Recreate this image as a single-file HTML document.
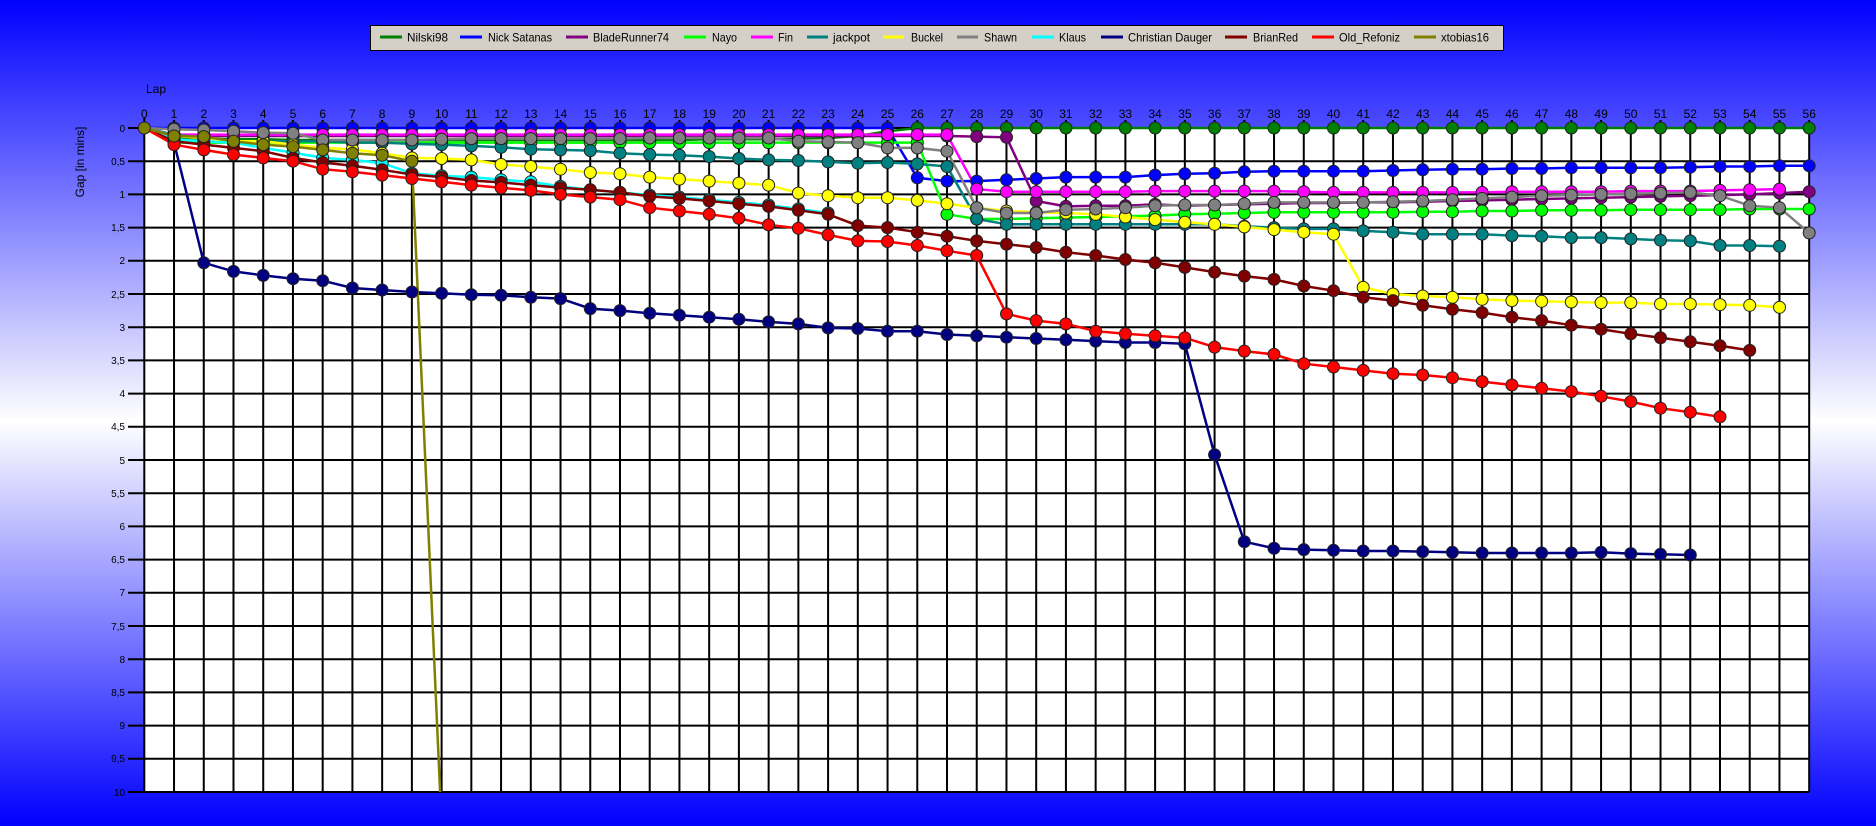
<!DOCTYPE html>
<html><head><meta charset="utf-8">
<style>
html,body{margin:0;padding:0}
body{width:1876px;height:826px;overflow:hidden;background:linear-gradient(#0000ff 0%,#ffffff 51%,#0000ff 100%);font-family:"Liberation Sans",sans-serif}
svg{position:absolute;left:0;top:0}
</style></head><body>
<svg id="s" width="1876" height="826" viewBox="0 0 1876 826" font-family="Liberation Sans, sans-serif">
<rect x="144.3" y="128" width="1665" height="664" fill="#fff"/>
<g id="grid" stroke="#000" stroke-width="2"></g>
<g id="xl" font-size="12" text-anchor="middle" fill="#000">
<text x="144.3" y="118">0</text><text x="174" y="118">1</text><text x="203.8" y="118">2</text><text x="233.5" y="118">3</text><text x="263.2" y="118">4</text><text x="293" y="118">5</text><text x="322.7" y="118">6</text><text x="352.4" y="118">7</text><text x="382.1" y="118">8</text><text x="411.9" y="118">9</text><text x="441.6" y="118">10</text><text x="471.3" y="118">11</text><text x="501.1" y="118">12</text><text x="530.8" y="118">13</text><text x="560.5" y="118">14</text><text x="590.3" y="118">15</text><text x="620" y="118">16</text><text x="649.7" y="118">17</text><text x="679.4" y="118">18</text><text x="709.2" y="118">19</text><text x="738.9" y="118">20</text><text x="768.6" y="118">21</text><text x="798.4" y="118">22</text><text x="828.1" y="118">23</text><text x="857.8" y="118">24</text><text x="887.6" y="118">25</text><text x="917.3" y="118">26</text><text x="947" y="118">27</text><text x="976.7" y="118">28</text><text x="1006.5" y="118">29</text><text x="1036.2" y="118">30</text><text x="1065.9" y="118">31</text><text x="1095.7" y="118">32</text><text x="1125.4" y="118">33</text><text x="1155.1" y="118">34</text><text x="1184.9" y="118">35</text><text x="1214.6" y="118">36</text><text x="1244.3" y="118">37</text><text x="1274" y="118">38</text><text x="1303.8" y="118">39</text><text x="1333.5" y="118">40</text><text x="1363.2" y="118">41</text><text x="1393" y="118">42</text><text x="1422.7" y="118">43</text><text x="1452.4" y="118">44</text><text x="1482.2" y="118">45</text><text x="1511.9" y="118">46</text><text x="1541.6" y="118">47</text><text x="1571.3" y="118">48</text><text x="1601.1" y="118">49</text><text x="1630.8" y="118">50</text><text x="1660.5" y="118">51</text><text x="1690.3" y="118">52</text><text x="1720" y="118">53</text><text x="1749.7" y="118">54</text><text x="1779.5" y="118">55</text><text x="1809.2" y="118">56</text>
</g>
<g font-size="10" text-anchor="end" fill="#000">
<text x="125" y="132">0</text><text x="125" y="165">0,5</text><text x="125" y="198">1</text><text x="125" y="231">1,5</text><text x="125" y="264">2</text><text x="125" y="298">2,5</text><text x="125" y="331">3</text><text x="125" y="364">3,5</text><text x="125" y="397">4</text><text x="125" y="430">4,5</text><text x="125" y="464">5</text><text x="125" y="497">5,5</text><text x="125" y="530">6</text><text x="125" y="563">6,5</text><text x="125" y="596">7</text><text x="125" y="630">7,5</text><text x="125" y="663">8</text><text x="125" y="696">8,5</text><text x="125" y="729">9</text><text x="125" y="762">9,5</text><text x="125" y="796">10</text>
</g>
<text x="146" y="93" font-size="12">Lap</text>
<text transform="translate(84,162) rotate(-90)" font-size="12" text-anchor="middle">Gap [in mins]</text>
<g id="data"></g>
<rect x="370.5" y="25.5" width="1133" height="25" fill="#d4d0c8" stroke="#000"/>
<g font-size="12" fill="#000">
<text x="407" y="41.5" textLength="41" lengthAdjust="spacingAndGlyphs">Nilski98</text><text x="488" y="41.5" textLength="64" lengthAdjust="spacingAndGlyphs">Nick Satanas</text><text x="593" y="41.5" textLength="76" lengthAdjust="spacingAndGlyphs">BladeRunner74</text><text x="712" y="41.5" textLength="25" lengthAdjust="spacingAndGlyphs">Nayo</text><text x="778" y="41.5" textLength="15" lengthAdjust="spacingAndGlyphs">Fin</text><text x="833" y="41.5" textLength="37" lengthAdjust="spacingAndGlyphs">jackpot</text><text x="911" y="41.5" textLength="32" lengthAdjust="spacingAndGlyphs">Buckel</text><text x="984" y="41.5" textLength="33" lengthAdjust="spacingAndGlyphs">Shawn</text><text x="1059" y="41.5" textLength="27" lengthAdjust="spacingAndGlyphs">Klaus</text><text x="1128" y="41.5" textLength="84" lengthAdjust="spacingAndGlyphs">Christian Dauger</text><text x="1253" y="41.5" textLength="45" lengthAdjust="spacingAndGlyphs">BrianRed</text><text x="1339" y="41.5" textLength="61" lengthAdjust="spacingAndGlyphs">Old_Refoniz</text><text x="1441" y="41.5" textLength="48" lengthAdjust="spacingAndGlyphs">xtobias16</text>
</g>
<g stroke-width="3">
<line x1="380" x2="402" y1="37" y2="37" stroke="#008000"/><line x1="460" x2="482" y1="37" y2="37" stroke="#0000ff"/><line x1="566" x2="588" y1="37" y2="37" stroke="#800080"/><line x1="684" x2="706" y1="37" y2="37" stroke="#00ff00"/><line x1="751" x2="773" y1="37" y2="37" stroke="#ff00ff"/><line x1="807" x2="828" y1="37" y2="37" stroke="#008080"/><line x1="883" x2="904" y1="37" y2="37" stroke="#ffff00"/><line x1="957" x2="978" y1="37" y2="37" stroke="#808080"/><line x1="1032" x2="1054" y1="37" y2="37" stroke="#00ffff"/><line x1="1101" x2="1123" y1="37" y2="37" stroke="#000080"/><line x1="1225" x2="1247" y1="37" y2="37" stroke="#800000"/><line x1="1312" x2="1334" y1="37" y2="37" stroke="#ff0000"/><line x1="1414" x2="1436" y1="37" y2="37" stroke="#808000"/>
</g>
</svg>
<script>
function X(n){return 144.3+29.73*n}function Y(v){return 128+66.4*v}
var g=document.getElementById("grid"),h="";
for(var n=0;n<=56;n++){h+='<line x1="'+X(n)+'" x2="'+X(n)+'" y1="'+(n==0?118:120)+'" y2="792"/>';}
for(var k=0;k<=20;k++){var y=Y(k/2);h+='<line x1="128" x2="1809.2" y1="'+y+'" y2="'+y+'"/>';}
g.innerHTML=h;
function rep(v,c){var a=[];for(var i=0;i<c;i++)a.push(v);return a}
var D=[
["#008000",[0,0.15,0.16,0.17,0.17,0.18,0.18,0.18,0.18,0.18,0.18,0.18,0.18,0.18,0.18,0.18,0.18,0.18,0.18,0.17,0.17,0.17,0.16,0.15,0.12,0.05].concat(rep(0,31))],
["#0000ff",rep(0,26).concat([0.75,0.8,0.8,0.78,0.76,0.74,0.74,0.74,0.71,0.69,0.68,0.66,0.65,0.65,0.65,0.65,0.64,0.63,0.62,0.62,0.61,0.61,0.6,0.6,0.6,0.6,0.59,0.58,0.58,0.57,0.57])],
["#800080",[0].concat(rep(0.12,27)).concat([0.13,0.14,1.1,1.18,1.17,1.17,1.15,1.17,1.16,1.15,1.14,1.13,1.13,1.12,1.12,1.11,1.1,1.09,1.08,1.07,1.06,1.05,1.04,1.03,1.02,1.01,1.0,0.98,0.96])],
["#00ff00",[0].concat(rep(0.22,26)).concat([1.3,1.37,1.37,1.36,1.35,1.34,1.33,1.32,1.3,1.29,1.28,1.27,1.27,1.27,1.27,1.27,1.26,1.26,1.25,1.25,1.24,1.24,1.24,1.23,1.23,1.23,1.23,1.22,1.22,1.22])],
["#ff00ff",[0].concat(rep(0.1,27)).concat([0.92,0.96,0.96,0.96,0.96,0.96,0.95,0.95,0.95,0.95,0.95,0.96,0.97,0.97,0.97,0.97,0.97,0.97,0.96,0.96,0.96,0.96,0.95,0.95,0.95,0.94,0.93,0.92])],
["#008080",[0,0.1,0.15,0.2,0.2,0.2,0.2,0.22,0.22,0.24,0.25,0.27,0.29,0.32,0.33,0.34,0.38,0.4,0.41,0.43,0.46,0.48,0.49,0.51,0.53,0.52,0.54,0.58,1.37,1.45,1.45,1.45,1.45,1.45,1.45,1.45,1.45,1.48,1.5,1.52,1.52,1.55,1.57,1.6,1.6,1.6,1.62,1.63,1.65,1.65,1.67,1.69,1.7,1.77,1.77,1.78]],
["#ffff00",[0,0.12,0.15,0.2,0.2,0.25,0.3,0.32,0.38,0.45,0.46,0.48,0.55,0.58,0.62,0.67,0.69,0.74,0.77,0.8,0.83,0.86,0.98,1.02,1.05,1.05,1.09,1.14,1.2,1.25,1.27,1.28,1.3,1.34,1.38,1.42,1.45,1.49,1.53,1.57,1.6,2.4,2.5,2.53,2.55,2.58,2.6,2.61,2.62,2.63,2.63,2.65,2.65,2.66,2.67,2.7]],
["#808080",[0,0.02,0.03,0.05,0.07,0.08,0.18,0.18,0.18,0.18,0.17,0.16,0.16,0.16,0.16,0.16,0.16,0.15,0.15,0.15,0.15,0.15,0.2,0.21,0.22,0.3,0.3,0.35,1.2,1.28,1.28,1.23,1.22,1.2,1.17,1.16,1.16,1.14,1.12,1.12,1.12,1.12,1.11,1.1,1.08,1.06,1.04,1.02,1.01,1.0,0.99,0.98,0.97,1.02,1.17,1.2,1.58]],
["#00ffff",[0,0.17,0.2,0.22,0.3,0.37,0.45,0.48,0.53,0.68,0.72,0.74,0.78,0.81,0.88,0.93,0.97,1.01,1.04,1.08,1.12,1.16,1.22,1.28]],
["#000080",[0,0.22,2.03,2.16,2.22,2.27,2.3,2.41,2.44,2.47,2.49,2.51,2.52,2.55,2.57,2.72,2.75,2.79,2.82,2.85,2.88,2.92,2.95,3.01,3.02,3.06,3.06,3.11,3.13,3.15,3.17,3.19,3.21,3.23,3.23,3.25,4.92,6.23,6.33,6.35,6.36,6.37,6.37,6.38,6.39,6.4,6.4,6.4,6.4,6.39,6.41,6.42,6.43]],
["#800000",[0,0.2,0.25,0.3,0.35,0.45,0.52,0.57,0.63,0.7,0.74,0.79,0.82,0.86,0.9,0.93,0.97,1.03,1.06,1.1,1.14,1.18,1.24,1.3,1.47,1.5,1.57,1.63,1.7,1.75,1.8,1.87,1.92,1.98,2.03,2.1,2.17,2.23,2.28,2.38,2.45,2.55,2.6,2.67,2.73,2.78,2.85,2.9,2.97,3.03,3.1,3.16,3.22,3.28,3.35]],
["#ff0000",[0,0.25,0.33,0.4,0.45,0.5,0.62,0.66,0.71,0.76,0.81,0.86,0.9,0.94,1.0,1.04,1.08,1.2,1.25,1.3,1.36,1.46,1.51,1.61,1.7,1.71,1.77,1.85,1.92,2.8,2.9,2.95,3.06,3.1,3.13,3.16,3.3,3.36,3.41,3.55,3.6,3.65,3.7,3.72,3.76,3.82,3.87,3.92,3.97,4.04,4.12,4.22,4.28,4.35]],
["#808000",[0,0.12,0.13,0.2,0.25,0.28,0.33,0.38,0.41,0.5]]
];
var out="";
D.forEach(function(d,i){
 var c=d[0],a=d[1],pts=a.map(function(v,n){return X(n).toFixed(1)+","+Y(v).toFixed(1)});
 if(i==12)pts.push(X(9.95).toFixed(1)+",792");
 out+='<polyline points="'+pts.join(" ")+'" fill="none" stroke="'+c+'" stroke-width="2.5"/>';
});
D.forEach(function(d,i){
 var c=d[0],a=d[1];
 a.forEach(function(v,n){ if(n==0&&i!=12)return;
  out+='<circle cx="'+X(n).toFixed(1)+'" cy="'+Y(v).toFixed(1)+'" r="6" fill="'+c+'" stroke="#222" stroke-width="1"/>';});
});
document.getElementById("data").innerHTML=out;
</script>
</body></html>
